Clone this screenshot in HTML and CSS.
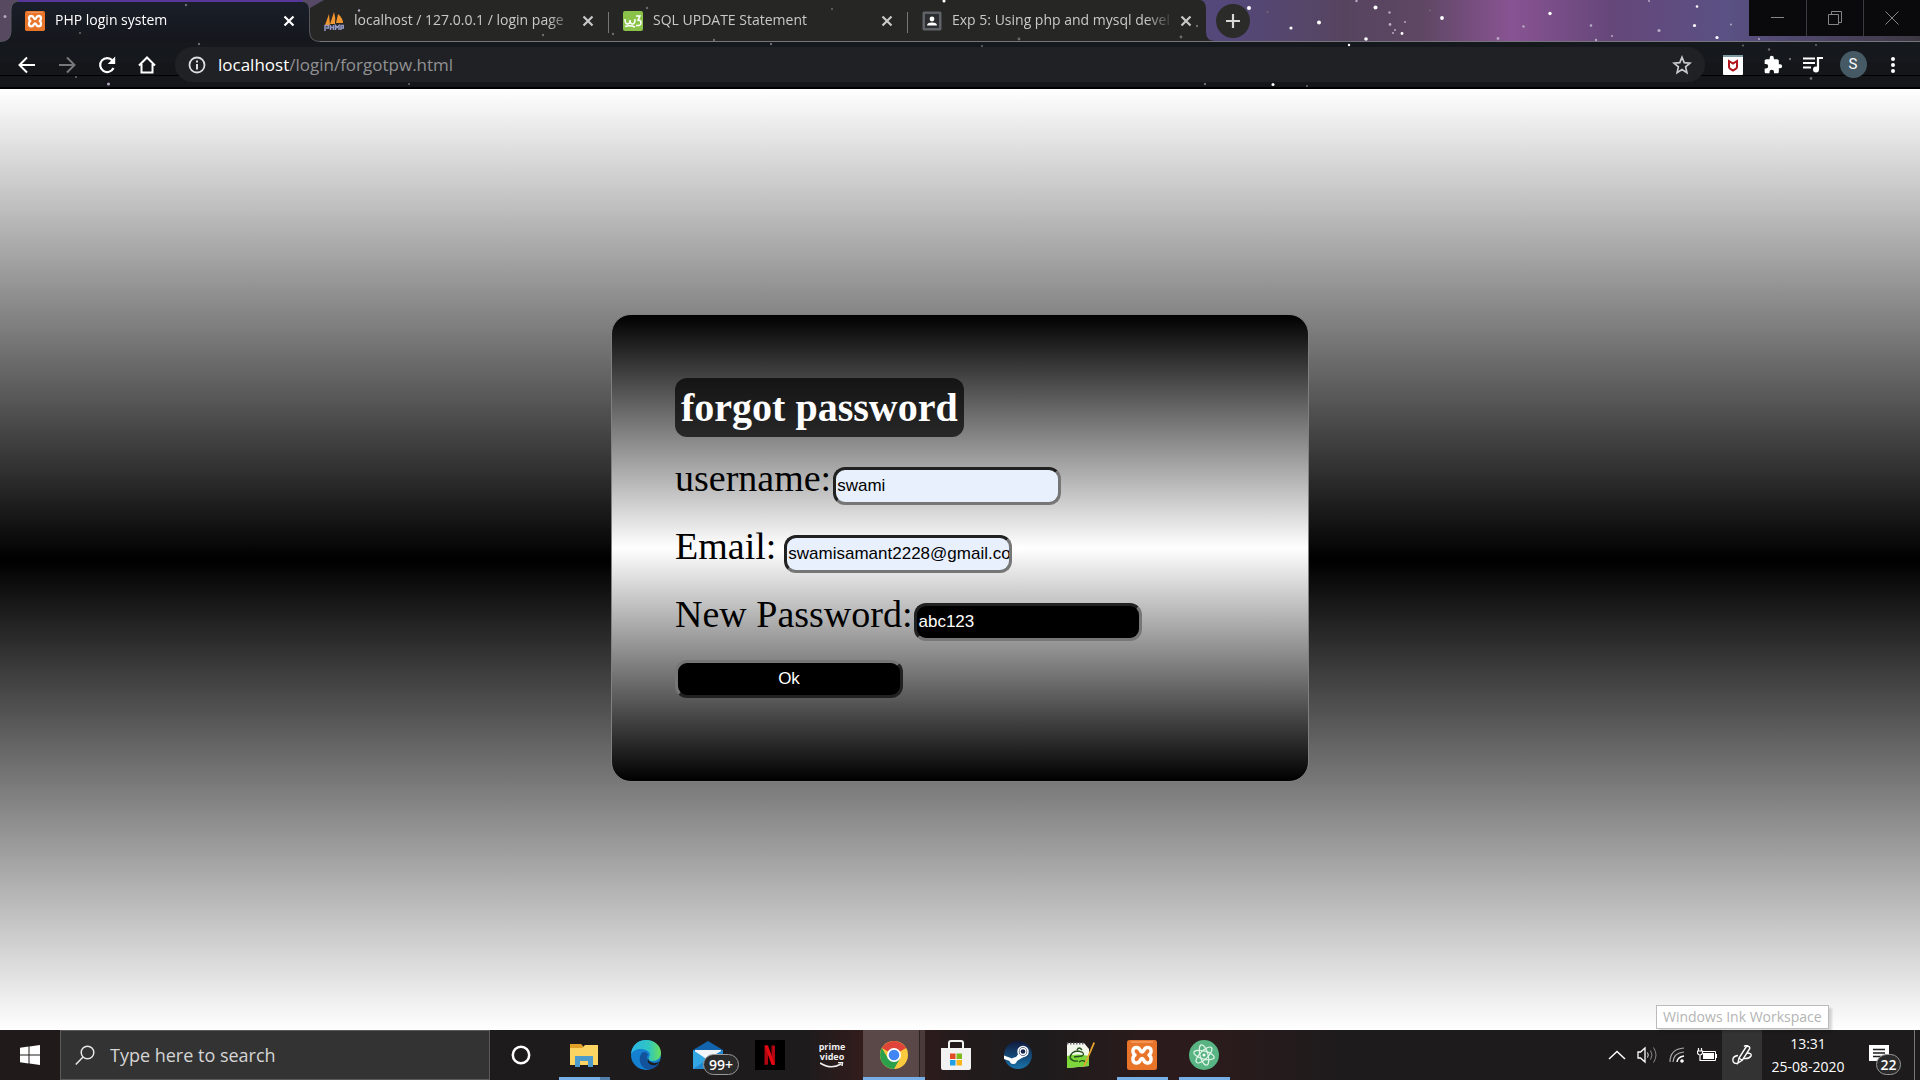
FILE: index.html
```html
<!DOCTYPE html>
<html lang="en">
<head>
<meta charset="utf-8">
<title>PHP login system</title>
<link rel="stylesheet" href="styles.css">
</head>
<body>
<svg width="0" height="0" class="sprite" aria-hidden="true">
  <symbol id="close" viewBox="0 0 12 12"><path d="M1.5 1.5l9 9M10.5 1.5l-9 9" stroke="currentColor" stroke-width="2.2"/></symbol>
  <symbol id="xampp" viewBox="0 0 30 30">
    <rect width="30" height="30" rx="2.5" fill="#e8742a"/>
    <path d="M4 2h22" stroke="#f5b183" stroke-width="1"/>
    <path d="M9.500 7.500C5 7.500 5 13 8 15C5 17 5 23 9.500 23C14 23 12.500 18.500 15 18.500C17.500 18.500 16 23 20.500 23C25 23 25 17 22 15C25 13 25 7.500 20.500 7.500C16 7.500 17.500 12 15 12C12.500 12 14 7.500 9.500 7.500Z" fill="none" stroke="#fff" stroke-width="3.400" stroke-linejoin="round"/>
  </symbol>
</svg>

<header class="browser">
  <svg class="sky" viewBox="0 0 1920 89" preserveAspectRatio="xMinYMin slice" aria-hidden="true">
    <defs>
      <linearGradient id="night"><stop offset="0" stop-color="#574a60"/><stop offset=".64" stop-color="#54487a"/><stop offset=".7" stop-color="#56445f"/><stop offset=".74" stop-color="#5e4763"/><stop offset=".787" stop-color="#885392"/><stop offset=".84" stop-color="#65477a"/><stop offset=".9" stop-color="#5a5184"/><stop offset="1" stop-color="#3c3842"/></linearGradient>
      <linearGradient id="bar" x2="0" y2="1"><stop offset="0" stop-color="#1a1f2a"/><stop offset="1" stop-color="#121315"/></linearGradient>
    </defs>
    <rect width="1920" height="42" fill="url(#night)"/>
    <rect y="42" width="1920" height="47" fill="#141619"/>
    <path d="M318 41.500H1920" stroke="#77757c"/>
    <path d="M324 0H1199Q1206 0 1206 9V32Q1206 41 1215 41H318Q310 41 310 32V8Z" fill="#262625"/>
    <path d="M0 41.500Q11 41.500 11 31V10Q11 1 20 1H300Q309.500 1 309.500 10V31Q309.500 41.500 320 41.500V60H0Z" fill="url(#bar)" stroke="#55555e"/>
    <rect y="42" width="1920" height="20" fill="#15181d"/>
    <path d="M18 1H303" stroke="#57379a" stroke-width="2"/>
    <path d="M608.500 12V33M907.500 12V33" stroke="#77777a"/>
    <path d="M0 75.500H1920" stroke="#000"/>
    <path d="M0 88H1920" stroke="#000" stroke-width="2"/>
    <g fill="#fff">
      <circle cx="1249" cy="8" r="2"/><circle cx="1291" cy="28" r="1.600"/><circle cx="1319" cy="22.500" r="2"/><circle cx="1375.500" cy="7.500" r="2"/><circle cx="1366" cy="39" r="1.800"/><circle cx="1402" cy="33.500" r="1.400"/><circle cx="1442" cy="18" r="1.900"/><circle cx="1550" cy="13.500" r="1.700"/><circle cx="1697" cy="6.500" r="1.300"/><circle cx="1694.500" cy="25.500" r="1.600"/><circle cx="1717" cy="37.500" r="1.600"/><circle cx="1349" cy="45" r="1.200"/><circle cx="1273" cy="84.500" r="1.500"/><circle cx="944" cy="1" r="1.500"/>
    </g>
    <g fill="#b8a9c4">
      <circle cx="1389.500" cy="12.500" r="1.200"/><circle cx="1390" cy="24.500" r="1.400"/><circle cx="1395" cy="30" r="1"/><circle cx="1393" cy="33" r="1"/><circle cx="1405" cy="22" r="1"/><circle cx="1356.500" cy="1" r="1.200"/><circle cx="1498" cy="38.500" r="1.400"/><circle cx="1523.500" cy="26.500" r="1.200"/><circle cx="1591" cy="25.500" r="1.300"/><circle cx="1596" cy="40" r="1.200"/><circle cx="1659" cy="30.500" r="1.600"/><circle cx="1731" cy="24.500" r="1"/><circle cx="1612" cy="36" r="1"/><circle cx="1649" cy="1" r="1"/><circle cx="1759" cy="39" r="1"/><circle cx="5" cy="16.500" r="1.500"/><circle cx="108.500" cy="84" r="1.500"/><circle cx="359" cy="10.500" r="1.200"/>
    </g>
    <g fill="#6c6c70">
      <circle cx="1267.500" cy="12" r="1"/><circle cx="1430" cy="10.500" r="1"/><circle cx="186" cy="5" r="1.200"/><circle cx="80" cy="33" r="1"/><circle cx="199" cy="44" r="1.200"/><circle cx="76" cy="77" r="1"/><circle cx="543" cy="35" r="1.200"/><circle cx="613" cy="34" r="1.200"/><circle cx="647" cy="8" r="1.200"/><circle cx="714" cy="40" r="1.200"/><circle cx="771" cy="44" r="1.200"/><circle cx="832" cy="9" r="1"/><circle cx="1019" cy="39" r="1.400"/><circle cx="1181" cy="37" r="1.400"/><circle cx="1197" cy="26" r="1.200"/><circle cx="982" cy="46" r="1"/><circle cx="1307" cy="86" r="1"/><circle cx="1205" cy="84" r="1.200"/><circle cx="1743" cy="45.500" r="1"/><circle cx="1769" cy="49.500" r="1.200"/><circle cx="1790" cy="59" r="1.200"/><circle cx="1811" cy="78.500" r="1.400"/><circle cx="409" cy="84" r="1"/><circle cx="1816" cy="45" r="1"/>
    </g>
  </svg>

  <div class="tab-strip">
    <div class="tab tab--active">
      <svg class="favicon"><use href="#xampp"/></svg>
      <span class="tab-title">PHP login system</span>
      <button class="tab-close" aria-label="Close tab"><svg width="12" height="12"><use href="#close"/></svg></button>
    </div>
    <div class="tab">
      <svg class="favicon" viewBox="0 0 20 20"><path d="M1 14L5 3L6 14ZM6 13L10 1Q12 7 11 13ZM12 12L14 3Q19 7 19 12Z" fill="#f0962e"/><path d="M1 20V14.500H4.500V17H2M6.500 14V19M6.500 16.500H9.500M9.500 14V19M11.500 19V14.500L13 16.500L15 14.500V19M17 19V14.500H19.500V17H17.500" fill="none" stroke="#9299c4" stroke-width="1.500"/></svg>
      <span class="tab-title">localhost / 127.0.0.1 / login page</span>
      <button class="tab-close" aria-label="Close tab"><svg width="12" height="12"><use href="#close"/></svg></button>
    </div>
    <div class="tab">
      <svg class="favicon" viewBox="0 0 20 20"><rect width="20" height="20" rx="2" fill="#8bc34a"/><path d="M2 8Q2 13 4.500 13Q7 13 7 9Q7 13 9.500 13Q12 13 12 8M13 5H17L15 9Q18 9 18 12Q18 15 13 14.500M2 15.500Q7 14 12 16" fill="none" stroke="#fff" stroke-width="1.500"/></svg>
      <span class="tab-title">SQL UPDATE Statement</span>
      <button class="tab-close" aria-label="Close tab"><svg width="12" height="12"><use href="#close"/></svg></button>
    </div>
    <div class="tab">
      <svg class="favicon" viewBox="0 0 20 20"><rect x=".5" y=".5" width="19" height="19" rx="1.500" fill="#5f6368"/><rect x="3" y="3" width="14" height="14" fill="#2b2d30"/><circle cx="10" cy="8" r="2.400" fill="#fff"/><path d="M5 14.500Q5 11.500 10 11.500T15 14.500Z" fill="#fff"/></svg>
      <span class="tab-title">Exp 5: Using php and mysql development</span>
      <button class="tab-close" aria-label="Close tab"><svg width="12" height="12"><use href="#close"/></svg></button>
    </div>
    <button class="new-tab" aria-label="New tab"><svg width="16" height="16" viewBox="0 0 16 16"><path d="M8 1V15M1 8H15" stroke="#d8d8d8" stroke-width="2.200"/></svg></button>
    <div class="window-controls">
      <button aria-label="Minimize"><svg width="14" height="14" viewBox="0 0 14 14"><path d="M0 6.500H13"/></svg></button>
      <button aria-label="Restore"><svg width="14" height="14" viewBox="0 0 14 14"><path d="M.5 3.500H10.500V13.500H.5ZM3.500 3.500V.5H13.500V11.500H10.500"/></svg></button>
      <button aria-label="Close window"><svg width="14" height="14" viewBox="0 0 14 14"><path d="M.5 .5L13.500 13.500M13.500 .5L.5 13.500"/></svg></button>
    </div>
  </div>

  <div class="toolbar">
    <nav class="tools" aria-label="Navigation">
      <button aria-label="Back"><svg width="18" height="18" viewBox="0 0 18 18"><path d="M17 9H2M9 1.500L1.500 9L9 16.500" fill="none" stroke="#fff" stroke-width="2"/></svg></button>
      <button aria-label="Forward"><svg width="18" height="18" viewBox="0 0 18 18"><path d="M1 9H16M9 1.500L16.500 9L9 16.500" fill="none" stroke="#77787a" stroke-width="2"/></svg></button>
      <button aria-label="Reload"><svg width="18" height="18" viewBox="0 0 18 18"><path d="M15.500 12A7 7 0 1 1 14.500 4.500" fill="none" stroke="#fff" stroke-width="2.200"/><path d="M17.200 .5V8H9.700Z" fill="#fff"/></svg></button>
      <button aria-label="Home"><svg width="18" height="18" viewBox="0 0 18 18"><path d="M3.500 8V16.500H14.500V8M1 9.500L9 1.500L17 9.500" fill="none" stroke="#fff" stroke-width="2"/></svg></button>
    </nav>
    <div class="address">
      <svg width="18" height="18" viewBox="0 0 18 18"><circle cx="9" cy="9" r="7.500" fill="none" stroke="#dcdde0" stroke-width="1.800"/><path d="M9 8V13.500M9 4.500V6.500" stroke="#dcdde0" stroke-width="2"/></svg>
      <span class="url" role="textbox" aria-label="Address"><span class="url-host">localhost</span>/login/forgotpw.html</span>
      <button class="bookmark" aria-label="Bookmark this page"><svg width="20" height="20" viewBox="0 0 20 20"><path d="M10 2.200L12.200 7.600L18 8.100L13.600 11.900L14.900 17.600L10 14.600L5.100 17.600L6.400 11.900L2 8.100L7.800 7.600Z" fill="none" stroke="#c9cacd" stroke-width="1.700"/></svg></button>
    </div>
    <div class="tools">
      <button aria-label="McAfee WebAdvisor"><svg width="20" height="20" viewBox="0 0 20 20"><rect width="20" height="20" rx="1" fill="#fff"/><rect width="20" height="2" fill="#7f9aa3"/><path d="M6 6L10 8.500L14 6V12Q14 13.500 10 15.500Q6 13.500 6 12Z" fill="none" stroke="#b0161c" stroke-width="2"/></svg></button>
      <button aria-label="Extensions"><svg width="20" height="20" viewBox="0 0 24 24"><path d="M20.500 11H19V7c0-1.100-.9-2-2-2h-4V3.500a2.500 2.500 0 0 0-5 0V5H4c-1.100 0-2 .9-2 2v3.800h1.500a2.700 2.700 0 0 1 0 5.400H2V20c0 1.100.9 2 2 2h3.800v-1.500a2.700 2.700 0 0 1 5.400 0V22H17c1.100 0 2-.9 2-2v-4h1.500a2.500 2.500 0 0 0 0-5z" fill="#fff"/></svg></button>
      <button aria-label="Media controls"><svg width="20" height="18" viewBox="0 0 20 18"><path d="M0 2.500H12M0 7H12M0 11.500H8" stroke="#fff" stroke-width="2"/><path d="M15 13V2H20" fill="none" stroke="#fff" stroke-width="2.200"/><circle cx="13" cy="13.500" r="3" fill="#fff"/></svg></button>
      <button aria-label="Profile"><span class="avatar">S</span></button>
      <button aria-label="Menu"><svg width="6" height="18" viewBox="0 0 6 18" fill="#fff"><circle cx="3" cy="3" r="2"/><circle cx="3" cy="9" r="2"/><circle cx="3" cy="15" r="2"/></svg></button>
    </div>
  </div>
</header>

<main class="page">
  <form class="card">
    <h1>forgot password</h1>
    <div class="field">
      <label for="username">username:</label>
      <input id="username" class="filled" type="text" value="swami">
    </div>
    <div class="field field--spaced">
      <label for="email">Email:</label>
      <input id="email" class="filled" type="text" value="swamisamant2228@gmail.co">
    </div>
    <div class="field">
      <label for="password">New Password:</label>
      <input id="password" type="text" value="abc123">
    </div>
    <button class="submit" type="button">Ok</button>
  </form>
</main>

<footer class="taskbar">
  <button class="start" aria-label="Start"><svg width="20" height="20" viewBox="0 0 20 20"><path d="M0 2.800L8.500 1.600V9.500H0ZM9.500 1.400L20 0V9.500H9.500ZM0 10.500H8.500V18.400L0 17.200ZM9.500 10.500H20V20L9.500 18.600Z" fill="#fff"/></svg></button>
  <label class="search">
    <svg width="20" height="20" viewBox="0 0 20 20"><circle cx="12.500" cy="7.500" r="6.300" fill="none" stroke="#e8e8e8" stroke-width="1.500"/><path d="M8 12L.8 19.500" stroke="#e8e8e8" stroke-width="1.500"/></svg>
    <input type="text" placeholder="Type here to search" aria-label="Search">
  </label>
  <nav class="apps" aria-label="Applications">
    <button class="app" aria-label="Cortana"><svg width="20" height="20" viewBox="0 0 20 20"><circle cx="10" cy="10" r="8.200" fill="none" stroke="#fff" stroke-width="2.500"/></svg></button>
    <button class="app app--open app--stacked" aria-label="File Explorer"><svg width="28" height="24" viewBox="0 0 28 24"><path d="M0 1H11L13 3V8H0Z" fill="#e2a126"/><path d="M0 5H12L15 2H28V22H0Z" fill="#fbd462"/><path d="M5 24V13H23V24H18V18H10V24Z" fill="#4c9bcb"/></svg></button>
    <button class="app" aria-label="Microsoft Edge"><svg width="30" height="30" viewBox="0 0 30 30"><defs><linearGradient id="edge-top"><stop offset="0" stop-color="#2bb5e8"/><stop offset=".6" stop-color="#2fc6c0"/><stop offset="1" stop-color="#6be05a"/></linearGradient></defs><circle cx="15" cy="15" r="15" fill="#1480cf"/><path d="M0 14C1 5 7 0 15 0C24 0 30 6 30 13C30 18 26 21 22 21C18 21 17 19 18 17C21 13 16 9 10 9C5 9 2 11 0 14Z" fill="url(#edge-top)"/><path d="M10 14C6 22 12 30 19 29.500C23 28.500 27 26 28 23C21 26 16 22 16 18C16 15 18 15 16 13C14 11 11 12 10 14Z" fill="#12539c"/><path d="M29 21C24 25 17 22 17 18C16 21 17 24 21 25Q26 26 29 21Z" fill="#1d1b1c"/></svg></button>
    <button class="app app--mail" aria-label="Mail"><svg width="30" height="28" viewBox="0 0 30 28"><path d="M0 9L15 0L30 9V14H0Z" fill="#1264ae"/><path d="M2 9H28V18H2Z" fill="#f2f5f8"/><path d="M0 9L15 19L30 9V28H0Z" fill="#32a7e4"/><path d="M0 28L18 16L30 9V28Z" fill="#2387cf"/></svg><span class="badge">99+</span></button>
    <button class="app" aria-label="Netflix"><svg width="30" height="30" viewBox="0 0 30 30"><rect width="30" height="30" fill="#000"/><path d="M9.500 5.500H13V24.500L9.500 25ZM16.500 5.500H20V25L16.500 24.500Z" fill="#b1060f"/><path d="M9.500 5.500H13L20 25L16.500 24.500Z" fill="#e50914"/></svg></button>
    <button class="app app--prime" aria-label="Prime Video"><span>prime</span><span>video</span><svg width="24" height="6" viewBox="0 0 24 6"><path d="M0 1Q11 8 21 2M18 .6H22.500L22 4" fill="none" stroke="#eee" stroke-width="1.500"/></svg></button>
    <button class="app app--active" aria-label="Google Chrome"><svg width="28" height="28" viewBox="0 0 28 28"><circle cx="14" cy="14" r="14" fill="#fbc93d"/><path d="M14 14L1.900 7A14 14 0 0 1 26.100 7Z" fill="#e04438"/><path d="M14 7H26.100L24 5H14Z" fill="#e04438"/><path d="M1.900 7A14 14 0 0 0 14 28L20 17.500L14 20.500L8 17.500Z" fill="#2c9f4c"/><circle cx="14" cy="14" r="7" fill="#fff"/><circle cx="14" cy="14" r="5.300" fill="#4285f4"/></svg></button>
    <button class="app" aria-label="Microsoft Store"><svg width="30" height="30" viewBox="0 0 30 30"><path d="M8 9V3Q8 1 10 1H20Q22 1 22 3V9" fill="none" stroke="#f4f4f4" stroke-width="2"/><path d="M0 8H30V28Q30 30 28 30H2Q0 30 0 28Z" fill="#f2f2f2"/><path d="M9 13.500H14.500V19H9Z" fill="#e24a25"/><path d="M15.500 13.500H21V19H15.500Z" fill="#7fba1d"/><path d="M9 20H14.500V25.500H9Z" fill="#1f9fe4"/><path d="M15.500 20H21V25.500H15.500Z" fill="#f9b517"/></svg></button>
    <button class="app" aria-label="Steam"><svg width="28" height="28" viewBox="0 0 28 28"><defs><linearGradient id="steam" x2="0" y2="1"><stop offset="0" stop-color="#10193c"/><stop offset="1" stop-color="#1a73aa"/></linearGradient></defs><circle cx="14" cy="14" r="14" fill="url(#steam)"/><path d="M0 14.500L8 17.500Q10 16 12 16L16 11L21 15L13 20Q12 23.500 9 23Q6.500 23 5.500 20L0 18Z" fill="#fff"/><circle cx="19" cy="10.500" r="5" fill="#15254c" stroke="#fff" stroke-width="1.500"/><circle cx="19" cy="10.500" r="3" fill="none" stroke="#fff" stroke-width="1.300"/></svg></button>
    <button class="app" aria-label="Notepad++"><svg width="30" height="28" viewBox="0 0 30 28"><path d="M2 2H19L24 8V25L2 27Z" fill="#f3f6ea"/><path d="M2 15Q12 12 24 15V25L2 27Z" fill="#7dd63a"/><path d="M2 2.500H19" stroke="#667" stroke-width="2" stroke-dasharray="1.500 1.500"/><path d="M5 17Q6 10 13 10L17 11Q20 13 17 15L9 16M5 17Q8 21 13 20M12 9Q14 5 17 9M14 21Q19 18 21 22" fill="none" stroke="#24501c" stroke-width="1.300"/><path d="M28.500 1L19 23L18 26L20.500 24L30 2Z" fill="#e5a32c"/></svg></button>
    <button class="app app--open" aria-label="XAMPP"><svg width="30" height="30"><use href="#xampp"/></svg></button>
    <button class="app app--open" aria-label="Atom"><svg width="30" height="30" viewBox="0 0 30 30"><circle cx="15" cy="15" r="15" fill="#58b583"/><g fill="none" stroke="#e3f5ea" stroke-width="1.200"><ellipse cx="15" cy="15" rx="10.500" ry="4" transform="rotate(15 15 15)"/><ellipse cx="15" cy="15" rx="10.500" ry="4" transform="rotate(75 15 15)"/><ellipse cx="15" cy="15" rx="10.500" ry="4" transform="rotate(135 15 15)"/></g><circle cx="15" cy="15" r="1.500" fill="#fff"/></svg></button>
  </nav>
  <div class="tray">
    <button aria-label="Show hidden icons"><svg width="18" height="10" viewBox="0 0 18 10"><path d="M1 9L9 1.500L17 9" fill="none" stroke="#fff" stroke-width="1.500"/></svg></button>
    <button aria-label="Volume"><svg width="20" height="18" viewBox="0 0 20 18" fill="none"><path d="M1 6H3.500L8 2V16L3.500 12H1Z" stroke="#fff" stroke-width="1.300"/><path d="M10.500 6.500Q12 9 10.500 11.500" stroke="#ddd"/><path d="M13.500 4.500Q16.500 9 13.500 13.500M16.500 1.500Q21.500 9 16.500 16.500" stroke="#888"/></svg></button>
    <button aria-label="Network"><svg width="16" height="16" viewBox="0 0 16 16" fill="none"><path d="M1 15Q1 2 15 1M4 15Q4.500 6 15 5" stroke="#aaa" stroke-width="1.200"/><path d="M8 15Q8.500 10 15 9" stroke="#fff" stroke-width="1.500"/><circle cx="13" cy="14" r="1.800" fill="#fff"/></svg></button>
    <button aria-label="Battery"><svg width="20" height="14" viewBox="0 0 20 14"><path d="M5 3.500H18.500V12.500H5" fill="none" stroke="#fff"/><path d="M6 5H17V11H6ZM19 6H20V10H19Z" fill="#fff"/><path d="M1.500 0V3M4.500 0V3M.5 3H5.500V5Q5 7 3 7Q1 7 .5 5ZM3 7V12.500H6" fill="none" stroke="#fff" stroke-width="1.200"/></svg></button>
    <button class="ink" aria-label="Windows Ink Workspace"><svg width="20" height="20" viewBox="0 0 20 20" fill="none" stroke="#fff" stroke-width="1.400"><path d="M6 18L7 13L14 2Q16 .5 17.500 2Q18 3 17.500 4L10.500 15ZM7.500 13.500L10 15"/><path d="M6 10.500Q1 11 .8 15Q1 19 6 18.500M15 8Q20 8 19 11Q17 14 12 13.500M12 1.500Q14 0 16 1"/></svg></button>
    <button class="clock"><span>13:31</span><span>25-08-2020</span></button>
    <button class="notifications" aria-label="Notifications"><svg width="20" height="20" viewBox="0 0 20 20"><path d="M0 0H20V16H11L8 19V16H0Z" fill="#fff"/><path d="M4 4.500H16M4 8H16M4 11.500H12" stroke="#1d1b1c" stroke-width="1.500"/></svg><span class="badge badge--count">22</span></button>
    <button class="show-desktop" aria-label="Show desktop"></button>
    <div class="tooltip" role="tooltip">Windows Ink Workspace</div>
  </div>
</footer>
</body>
</html>
```
FILE: styles.css
```css
* { box-sizing: border-box; }

body {
  margin: 0;
  min-height: 100vh;
  display: flex;
  flex-direction: column;
  overflow-x: hidden;
  font-family: "Open Sans", "Noto Sans", sans-serif;
  color: #fff;
}

button {
  margin: 0;
  padding: 0;
  border: 0;
  background: none;
  color: inherit;
  font: inherit;
}

svg { flex: none; display: block; }
.sprite { position: absolute; }

/* Browser chrome */
.browser { position: relative; background: #141619; }
.sky { position: absolute; inset: 0; width: 100%; height: 100%; }
.tab-strip, .toolbar { position: relative; display: flex; }

.tab-strip { height: 42px; padding-left: 10px; align-items: flex-start; }
.tab {
  flex: 0 1 299px;
  min-width: 0;
  height: 42px;
  padding: 0 14px 0 15px;
  display: flex;
  align-items: center;
  gap: 10px;
  color: #c9c9ca;
  font-size: 14px;
}
.tab--active { color: #fff; }
.favicon { width: 20px; height: 20px; }
.tab-title {
  flex: 1;
  min-width: 0;
  line-height: 22px;
  padding-bottom: 2px;
  overflow: hidden;
  white-space: nowrap;
  mask-image: linear-gradient(to right, #000 194px, transparent 222px);
}
.new-tab {
  width: 34px;
  height: 34px;
  margin: 4px 0 0 10px;
  display: grid;
  place-items: center;
  border-radius: 50%;
  background: #2b2b2a;
}
.window-controls { display: flex; margin-left: auto; background: #0a0a0d; }
.window-controls button {
  width: 57px;
  height: 36px;
  display: grid;
  place-items: center;
}
.window-controls button + button { border-left: 1px solid #3c3c40; }
.window-controls path { fill: none; stroke: #858588; }

.toolbar { height: 47px; padding: 5px 7px 7px 7px; gap: 8px; }
.tools { display: flex; }
.tools button { width: 40px; display: grid; place-items: center; }
.address {
  flex: 1;
  min-width: 0;
  display: flex;
  align-items: center;
  gap: 12px;
  padding: 0 13px;
  border-radius: 18px;
  background: #202124;
  font-size: 17px;
}
.url { color: #909194; flex: 1; padding-bottom: 1px; }
.url-host { color: #fff; }
.avatar {
  width: 27px;
  height: 27px;
  border-radius: 50%;
  background: #455a64;
  font: 15px/27px Roboto, sans-serif;
}

/* Page */
.page {
  flex: 1;
  display: flex;
  align-items: center;
  justify-content: center;
  padding-bottom: 24px;
  background: linear-gradient(#fff, #000, #fff);
  color: #000;
}
.card {
  width: 698px;
  max-width: 100%;
  padding: 63px 63px 83px;
  display: flex;
  flex-direction: column;
  align-items: flex-start;
  gap: 19px;
  border: 1px solid #808080;
  border-radius: 20px;
  background: linear-gradient(#000, #fff, #000);
  font-family: "Liberation Serif", serif;
}
h1 {
  margin: 0;
  padding: 6px;
  border-radius: 12px;
  background: rgba(0, 0, 0, .7);
  color: #fff;
  font-size: 40px;
  line-height: 47px;
}
.field { display: flex; align-items: baseline; gap: 2px; }
.field--spaced { gap: 8px; }
.field label { font-size: 38px; line-height: 44px; }
.field input, .submit {
  width: 228px;
  height: 38px;
  padding: 0;
  border: 3px inset #767676;
  border-radius: 12px;
  background: #000;
  color: #fff;
  font: 17px "Liberation Sans", sans-serif;
}
.field input { padding-left: 1px; }
.field .filled { background: #e8f0fe; color: #000; }
.submit { border-style: outset; }

/* Taskbar */
.taskbar {
  height: 50px;
  display: flex;
  background: linear-gradient(to right, #211a1a, #1d1b1c 30%, #1e1b1c 42%, #3a1c1c 46%, #231b1c 50%, #1d1b1c 54%, #2c1b1c 60%, #2a1b1c 64%, #1d1b1c 70%);
}
.start { width: 60px; display: grid; place-items: center; }
.search {
  flex: 0 1 430px;
  display: flex;
  align-items: center;
  gap: 15px;
  padding: 0 14px;
  border: 1px solid #5a5a5a;
  background: #333;
}
.search input {
  flex: 1;
  min-width: 0;
  padding: 0;
  border: 0;
  background: none;
  color: #d5d5d5;
  font: 18px "Open Sans", sans-serif;
}
.search input::placeholder { color: #d5d5d5; }
.apps { display: flex; }
.app {
  position: relative;
  width: 62px;
  display: flex;
  flex-direction: column;
  align-items: center;
  justify-content: center;
}
.app:first-child { margin-right: 1px; }
.app--open::after {
  content: "";
  position: absolute;
  left: 6px;
  right: 5px;
  bottom: 0;
  height: 3px;
  background: #76aee8;
}
.app--stacked::after { background: linear-gradient(to right, #76aee8 41px, #547fab 41px); }
.app--active {
  border-bottom: 3px solid #76aee8;
  background: linear-gradient(to right, #5a4848 56px, #2c2222 56px, #2c2222 57px, #4a3a3a 57px);
  padding-top: 3px;
}
.app--prime {
  font-size: 9px;
  line-height: 10px;
  font-weight: 700;
  color: #eee;
}
.badge {
  position: absolute;
  left: 26px;
  top: 24px;
  width: 36px;
  height: 21px;
  border: 1px solid #999;
  border-radius: 11px;
  background: #2b2b2b;
  font-size: 14px;
  font-weight: 600;
  line-height: 19px;
  text-align: center;
}
.badge--count { left: 22px; width: 25px; }

.tray { position: relative; display: flex; margin-left: auto; }
.tray button { width: 30px; display: grid; place-items: center; }
.tray .ink { width: 40px; background: #333; }
.tray .clock {
  width: 92px;
  align-content: center;
  font-size: 14px;
  line-height: 23px;
}
.tray .notifications { position: relative; width: 60px; padding-right: 10px; }
.tray .show-desktop { width: 6px; border-left: 1px solid #777; }
.tooltip {
  position: absolute;
  left: 54px;
  bottom: 51px;
  padding: 0 6px;
  border: 1px solid #bbb;
  background: #fff;
  box-shadow: 3px 3px 2px rgba(0, 0, 0, .15);
  color: #b4b4b4;
  font-size: 14px;
  line-height: 22px;
  white-space: nowrap;
}
```
